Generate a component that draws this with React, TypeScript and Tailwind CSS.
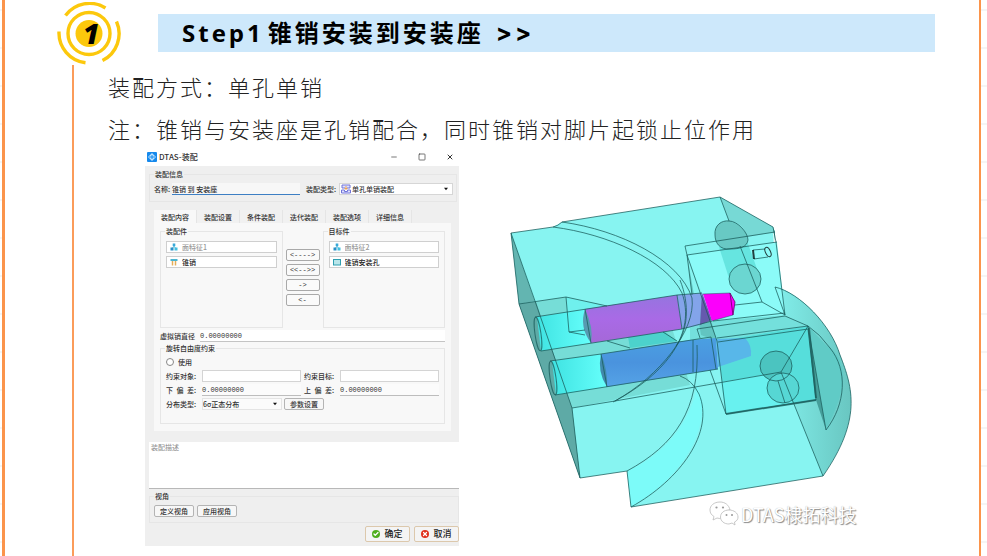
import React from "react";
import { Check, Minus, Square, X } from "lucide-react";

const tabs = ["装配内容", "装配设置", "条件装配", "迭代装配", "装配选项", "详细信息"];
const moves = ["<---->", "<<-->>", "->", "<-"];

function StepBadge() {
  return (
    <svg viewBox="0 0 64 64" className="w-16 h-16 shrink-0" role="img" aria-label="1">
      <g fill="none" stroke="#fcc80c" strokeWidth="3.4">
        <circle cx="32" cy="31.500" r="21" />
        <path d="M8.500 13.500A30 30 0 0 1 48.500 6" />
        <path d="M59.500 19.500A30 30 0 0 1 45.500 58.500" />
        <path d="M2 29.500A30 30 0 0 0 28.500 60.700" />
      </g>
      <circle cx="32" cy="31.500" r="13.500" fill="#fcc80c" />
      <text
        x="34"
        y="42"
        textAnchor="middle"
        fontFamily="Open Sans, sans-serif"
        fontWeight="800"
        fontStyle="italic"
        fontSize="28"
      >
        1
      </text>
    </svg>
  );
}

function FeatureIcon() {
  return (
    <svg viewBox="0 0 8 8" className="w-2 h-2 shrink-0">
      <path d="M4 2.500V4M2 5.500L4 3.500L6 5.500" stroke="#51b9dc" fill="none" />
      <rect x="2.700" y="0.500" width="2.600" height="2.600" fill="#37a8d8" />
      <rect x="0.500" y="4.500" width="3" height="3" fill="#288fc8" />
      <rect x="4.500" y="4.500" width="3" height="3" fill="#42bfe0" />
    </svg>
  );
}

function PinIcon() {
  return (
    <svg viewBox="0 0 8 8" className="w-2 h-2 shrink-0">
      <rect x="0.500" y="1" width="7" height="2" fill="#4bb5d0" />
      <path d="M2.500 3V7.500M5.500 3V7.500" stroke="#e6ae58" strokeWidth="1.500" />
    </svg>
  );
}

function HoleIcon() {
  return (
    <svg viewBox="0 0 8 8" className="w-2 h-2 shrink-0">
      <rect x="0.500" y="1.500" width="7" height="5.500" fill="#b9e6ea" stroke="#2e9fb0" />
    </svg>
  );
}

function AssemblyIcon() {
  return (
    <svg viewBox="0 0 10 10" className="w-2.5 h-2.5 shrink-0">
      <path d="M1 4V1H9V4H6M4 4H1" fill="#dfe1ff" stroke="#7074d8" />
      <path d="M0.500 9V6H3.500V7.500H6.500V6H9.500V9Z" fill="#dfe1ff" stroke="#7074d8" />
      <path d="M5 2V6M3.500 4.500H6.500" stroke="#eaa353" />
    </svg>
  );
}

function Arrow() {
  return (
    <svg viewBox="0 0 6 4" className="w-1 h-1 mr-1 shrink-0">
      <path d="M0 0H6L3 4Z" fill="#111" />
    </svg>
  );
}

function Group({ title, className, children }: { title: string; className?: string; children?: React.ReactNode }) {
  return (
    <fieldset className={`min-w-0 border border-[#e6e6e6] ${className ?? ""}`}>
      <legend className="ml-1 px-px leading-[8px]">{title}</legend>
      {children}
    </fieldset>
  );
}

function ListItem({ icon, value, muted }: { icon: React.ReactNode; value: string; muted?: boolean }) {
  return (
    <div className="flex items-center gap-1 h-3 pl-[3px] bg-white border border-[#cfcfcf]">
      {icon}
      <input
        readOnly
        aria-label={value}
        defaultValue={value}
        className={`min-w-0 flex-1 bg-transparent outline-none ${muted ? "text-[#999]" : "text-[#222]"}`}
      />
    </div>
  );
}

function Field({ id, label, value }: { id: string; label: string; value?: string }) {
  return (
    <div className="flex items-center flex-1 min-w-0">
      <label htmlFor={id} className="w-9 shrink-0 whitespace-nowrap">
        {label}
      </label>
      <input
        id={id}
        defaultValue={value}
        className={`min-w-0 flex-1 h-3 font-['Liberation_Mono','Noto_Sans_CJK_SC',monospace] outline-none ${
          value ? "bg-[#fbfbfb] border-b border-[#bdbdbd]" : "bg-white border border-[#d4d4d4]"
        }`}
      />
    </div>
  );
}

const smallButton = "h-3 w-10 rounded-[2px] border border-[#b4b4b4] bg-[#f7f7f7] leading-[9px]";
const actionButton =
  "flex items-center justify-center gap-1 w-[45px] h-4 rounded-[2px] border border-[#dcc8ac] bg-[#f4f4f4] text-[9px] text-[#222]";

function AssemblyDialog() {
  return (
    <section
      aria-label="DTAS-装配"
      className="w-[314px] shrink-0 text-[7px] leading-[8px] font-medium text-[#333] font-['Noto_Sans_CJK_SC',sans-serif]"
    >
      <div className="flex items-center h-[18px] pl-[2px] pr-[5px]">
        <svg viewBox="0 0 10 10" className="w-2.5 h-2.5">
          <rect width="10" height="10" rx="1" fill="#1689ec" />
          <path d="M5 1L9 5L5 9L1 5Z" fill="#bfe4ff" />
          <path d="M2 5H8M5 3V7" stroke="#1689ec" />
        </svg>
        <h2 className="ml-0.5 flex-1 text-[8px]">DTAS-装配</h2>
        <div className="flex items-center gap-5 text-[#333]">
          <button aria-label="最小化"><Minus className="w-2 h-2" /></button>
          <button aria-label="最大化"><Square className="w-2 h-2" /></button>
          <button aria-label="关闭"><X className="w-2 h-2" strokeWidth={3} /></button>
        </div>
      </div>

      <div className="bg-[#efefef] pt-1 pl-1 pb-1">
        <Group title="装配信息" className="mr-0.5 h-8">
          <div className="flex items-center pt-[5px] pl-1 pr-[3px]">
            <label htmlFor="name" className="w-[18px]">名称:</label>
            <input
              id="name"
              defaultValue="锥销 到 安装座"
              className="w-32 h-3 bg-[#f7f7f7] border-b border-[#3d7fc4] outline-none"
            />
            <label htmlFor="kind" className="ml-[6px] w-[33px] whitespace-nowrap">装配类型:</label>
            <div className="flex items-center flex-1 h-3 pl-px bg-white border border-[#d6d6d6]">
              <AssemblyIcon />
              <select id="kind" className="flex-1 min-w-0 appearance-none bg-transparent pl-px outline-none">
                <option>单孔单销装配</option>
              </select>
              <Arrow />
            </div>
          </div>
        </Group>

        <div role="tablist" className="flex mt-2 ml-[5px]">
          {tabs.map((tab, i) => (
            <button
              key={tab}
              role="tab"
              aria-selected={i === 0}
              className={`w-[43px] h-[13px] border-r border-[#e5e5e5] ${i === 0 ? "bg-[#f8f8f8]" : "bg-[#f1f1f1]"}`}
            >
              {tab}
            </button>
          ))}
        </div>

        <div className="ml-[5px] mr-2 bg-[#f8f8f8] pt-1 px-[6px] pb-[7px]">
          <div className="flex gap-[3px]">
            <Group title="装配件" className="flex-1 h-[101px]">
              <div className="flex flex-col gap-[3px] pt-[6px] px-[5px]">
                <ListItem icon={<FeatureIcon />} value="面特征1" muted />
                <ListItem icon={<PinIcon />} value="锥销" />
              </div>
            </Group>
            <div className="flex flex-col gap-[3px] pt-[22px]">
              {moves.map((move) => (
                <button
                  key={move}
                  className="w-[34px] h-3 rounded-[2px] border border-[#a9a9a9] bg-[#fafafa] leading-[9px] font-['Liberation_Mono',monospace]"
                >
                  {move}
                </button>
              ))}
            </div>
            <Group title="目标件" className="flex-1 h-[101px]">
              <div className="flex flex-col gap-[3px] pt-[6px] px-[5px]">
                <ListItem icon={<FeatureIcon />} value="面特征2" muted />
                <ListItem icon={<HoleIcon />} value="锥销安装孔" />
              </div>
            </Group>
          </div>

          <div className="flex items-center mt-[2px]">
            <label htmlFor="diameter" className="w-10">虚拟销直径</label>
            <input
              id="diameter"
              defaultValue="0.00000000"
              className="flex-1 h-3 bg-white border-b border-[#c4c4c4] font-['Liberation_Mono',monospace] outline-none"
            />
          </div>

          <Group title="旋转自由度约束" className="mt-[2px] h-20">
            <div className="flex flex-col gap-[2px] px-[5px] pt-1">
              <label className="flex items-center gap-1 h-3">
                <input type="radio" className="appearance-none w-2 h-2 rounded-full border border-[#888] bg-white" />
                使用
              </label>
              <div className="flex gap-[3px]">
                <Field id="object" label="约束对象:" />
                <Field id="target" label="约束目标:" />
              </div>
              <div className="flex gap-[3px]">
                <Field id="lower" label={"下\u2002偏\u2002差:"} value="0.00000000" />
                <Field id="upper" label={"上\u2002偏\u2002差:"} value="0.00000000" />
              </div>
              <div className="flex items-center">
                <label htmlFor="spread" className="w-9">分布类型:</label>
                <div className="flex items-center w-20 h-3 mr-[2px] border border-[#e4e4e4] bg-[#fbfbfb]">
                  <select id="spread" className="flex-1 min-w-0 appearance-none bg-transparent outline-none">
                    <option>6σ正态分布</option>
                  </select>
                  <Arrow />
                </div>
                <button className={smallButton}>参数设置</button>
              </div>
            </div>
          </Group>
        </div>

        <textarea
          aria-label="装配描述"
          placeholder="装配描述"
          className="block w-full h-[47px] mt-[11px] px-[2px] py-px resize-none bg-white border-b border-[#b8b8b8] placeholder:text-[#999] outline-none"
        />

        <Group title="视角" className="mt-[3px] h-[31px]">
          <div className="flex gap-[3px] pt-[5px] pl-1">
            <button className={smallButton}>定义视角</button>
            <button className={smallButton}>应用视角</button>
          </div>
        </Group>

        <div className="flex justify-end gap-1 mt-[3px]">
          <button className={actionButton}>
            <span className="flex items-center justify-center w-2 h-2 rounded-full bg-[#4fae1d] text-white">
              <Check className="w-1.5 h-1.5" strokeWidth={5} />
            </span>
            确定
          </button>
          <button className={actionButton}>
            <span className="flex items-center justify-center w-2 h-2 rounded-full bg-[#e0301c] text-white">
              <X className="w-1.5 h-1.5" strokeWidth={5} />
            </span>
            取消
          </button>
        </div>
      </div>
    </section>
  );
}

function PinModel() {
  return (
    <svg viewBox="500 185 370 350" className="block w-full" role="img" aria-label="锥销与安装座">
      <defs>
        <linearGradient id="bore" x1="0" x2="1">
          <stop offset="0" stopColor="#3fe3e2" />
          <stop offset="1" stopColor="#66fffb" />
        </linearGradient>
        <linearGradient id="violet" x1="0" y1="0" x2="0" y2="1">
          <stop offset="0" stopColor="#9575df" />
          <stop offset="0.500" stopColor="#a96ae6" />
          <stop offset="1" stopColor="#a568d8" />
        </linearGradient>
        <linearGradient id="blue" x1="0" y1="0" x2="0" y2="1">
          <stop offset="0" stopColor="#4aa0e2" />
          <stop offset="0.500" stopColor="#4a93de" />
          <stop offset="1" stopColor="#55a3e6" />
        </linearGradient>
        <linearGradient id="rim" x1="0" x2="1">
          <stop offset="0" stopColor="#82efeb" />
          <stop offset="1" stopColor="#69c6c1" />
        </linearGradient>
      </defs>

      {/* body */}
      <path
        d="M511 233L553 227L562 222L720 197L773 227L776 287C800 293 831 325 840 355C853 388 862 420 823 476L631 507L627 471L580 478L519 304Z"
        fill="#87f4f1"
      />
      <path d="M720 197L773 227L775 232L747 237C745 228 738 221 729 221Z" fill="#77d9d5" />
      <path d="M775 232L773 227L785 315L775 287Z" fill="#59aaa7" />
      <path d="M776 287C800 293 831 325 840 355C853 388 862 420 823 476L781 372L808 326L785 315Z" fill="url(#rim)" />
      <path d="M808 326L826 430C846 392 851 360 826 345Z" fill="#60cbc6" />
      <path d="M511 233L519 304L580 478L572 408Z" fill="#63b5b1" />
      <path d="M519 304L566 297L607 306L663 300L690 385L572 408L535 301Z" fill="#76ddd7" />
      <path d="M519 304L536 302L572 408L580 478Z" fill="#5eaaa6" />
      <path d="M566 297L607 306L585 310L585 331L569 332Z" fill="#6ff0ed" />
      <path d="M628 337L664 331L677 341L630 348Z" fill="#4cd2cc" />
      <path d="M690 326L713 320L785 315L808 326L717 341L690 345Z" fill="#74e0dc" />
      <path d="M627 471C665 455 692 420 697 385L702 400C706 440 675 482 631 507Z" fill="#7cfbf9" />

      {/* upper bores */}
      <path d="M687 255L777 242L785 315L713 321Z" fill="#8bfbf8" />
      <path d="M687 255L692 295L702 293L711 320L717 341L701 335Z" fill="#62c5c1" />
      <path d="M719 247L747 241L761 280L729 278Z" fill="#66e5e0" />
      <path d="M715 235C714 225 722 220 729 221C738 221 748 233 748 240C747 247 740 249 730 249C720 250 715 243 715 235Z" fill="#68c9c4" />
      <ellipse cx="745" cy="279" rx="16" ry="15" fill="#6bd6d1" />

      {/* lower pocket */}
      <path d="M717 341L808 326L816 400L726 414Z" fill="#56dedb" />
      <path d="M721 382L781 372L792 403L726 414Z" fill="#68f1ef" />
      <path d="M808 326L816 400L826 430Z" fill="#459e9a" />
      <ellipse cx="776" cy="366" rx="16" ry="15" fill="#4bc4c0" />
      <ellipse cx="783" cy="388" rx="16" ry="15" fill="#56d7d4" />

      {/* pin 1 */}
      <path d="M537 317L585 309L591 343L541 351Z" fill="url(#bore)" />
      <path d="M585 309L677 295L682 329L591 343Z" fill="url(#violet)" />
      <path d="M585 309Q579 327 591 343Q594 328 585 309Z" fill="#579ab1" />
      <path d="M677 295L702 293L700 325L682 329Z" fill="#83a4ea" />
      <path d="M702 293L712 320L700 325Z" fill="#6559ae" />
      <path d="M703 294L730 293L735 302L733 315L712 321Z" fill="#fb00fb" />

      {/* pin 2 */}
      <path d="M552 361L601 354L607 387L556 395Z" fill="url(#bore)" />
      <path d="M601 354L690 340L716 338L718 369L607 387Z" fill="url(#blue)" />
      <path d="M716 339L745 338Q752 345 751 356L718 367Z" fill="#58b7e9" />
      <path d="M601 354Q597 372 607 387Q608 370 601 354Z" fill="#408aad" />

      <g fill="none" stroke="#195b59" strokeWidth="1" strokeOpacity="0.750">
        <path d="M511 233L553 227Q558 226 562 222L720 197L773 227L776 242L785 315L775 287C800 293 831 325 840 355C853 388 862 420 823 476L631 507L627 471L580 478L519 304Z" />
        <path d="M511 233L535 301L572 408L580 478M572 408L615 401L781 372L823 476M781 372L808 326" />
        <path d="M519 304L566 297L607 306M566 297L569 332L585 330M569 332L585 335M607 341L630 348M663 332L677 341" />
        <path d="M562 222C620 230 680 260 692 298C696 330 660 376 615 401" />
        <path d="M553 227C608 234 666 260 682 293C696 332 668 373 613 402" />
        <path d="M680 280C690 305 688 330 676 346" />
        <path d="M720 197L729 221M685 246L775 232M687 255L777 242M685 246L687 255L717 341M687 255L692 295M740 246L762 302L785 315M735 305L762 302M713 321L785 313M697 329L785 316L808 326" />
        <path d="M715 235C714 225 722 220 729 221C738 221 748 233 748 240C747 247 740 249 730 249C720 250 715 243 715 235Z" />
        <ellipse cx="745" cy="279" rx="16" ry="15" />
        <path d="M753 250L765 249M754 259L768 257" />
        <path d="M753 250L754 259" stroke="#000" strokeWidth="2" />
        <ellipse cx="768" cy="252" rx="2.500" ry="5" transform="rotate(-25 768 252)" stroke="#000" />
        <path d="M697 329L700 338M717 338L808 326M718 342L808 329L816 400L726 414L717 341M710 370L726 414M711 337L716 369" />
        <path d="M808 326L826 430C846 404 848 370 830 348Q820 334 808 326" />
        <path d="M726 414L816 400" strokeWidth="2" />
        <path d="M809 328L816 398" strokeWidth="2" />
        <ellipse cx="776" cy="366" rx="16" ry="15" />
        <ellipse cx="783" cy="388" rx="16" ry="15" />
        <path d="M778 381L785 403" />
        <path d="M627 471C675 445 700 410 697 345M631 507C680 480 715 432 699 394Q692 380 680 376" />
        <ellipse cx="538" cy="334" rx="3" ry="17" transform="rotate(-8 538 334)" />
        <ellipse cx="553" cy="378" rx="3" ry="17" transform="rotate(-8 553 378)" />
        <path d="M535 317L677 295L702 293M541 351L682 329L712 321M585 309L591 343M677 295L682 329M550 361L601 354L711 337M555 395L718 369M601 354L607 387M693 340V372" />
        <path d="M703 294L730 293M712 321L733 315" strokeOpacity="0.500" />
        <path d="M730 293L733 315L735 302Z" stroke="#5b005f" />
      </g>
    </svg>
  );
}

function Watermark() {
  return (
    <figcaption className="absolute left-[209px] top-[316px] flex items-center gap-0.5 whitespace-nowrap text-[18px] leading-[24px] text-white font-['Noto_Sans_CJK_SC',sans-serif] [text-shadow:1px_1px_1px_#888,0px_0px_1px_#aaa]">
      <svg viewBox="0 0 30 26" className="w-[30px] h-[26px]">
        <g fill="#fff" stroke="#bbb" strokeWidth="0.800">
          <path d="M11 1C5 1 1 4.500 1 9C1 12 2.500 14 5 15.500L4 19L8 17Q11 18 13 17C14 12 18 9 21 9C20 4 16 1 11 1Z" />
          <path d="M20 9C15 9 11.500 12 11.500 16C11.500 20 15 23 20 23L23 22L26 24L25.500 21C28 20 29 18 29 16C29 12 25 9 20 9Z" />
        </g>
        <g fill="#999">
          <circle cx="7.500" cy="6.500" r="1.100" />
          <circle cx="14" cy="6.500" r="1.100" />
          <circle cx="17.500" cy="14" r="1" />
          <circle cx="23" cy="14" r="1" />
        </g>
      </svg>
      DTAS棣拓科技
    </figcaption>
  );
}

export default function App() {
  return (
    <div className="min-h-screen flex pl-[2px] pr-[6px] bg-[repeating-linear-gradient(#fff_0px,#fff_9px,#f5f5f5_9px,#f5f5f5_11px,#fff_11px,#fff_38px)]">
      <main className="flex flex-col flex-1 min-w-0 bg-white border-l-[3px] border-r-2 border-[#fb944b]">
        <header className="flex items-start pl-[52px] pr-11 pt-[2px] h-[65px]">
          <StepBadge />
          <h1 className="flex-1 flex gap-3 mt-3 ml-[37px] pl-[24px] h-[38px] bg-[#cde8fb] text-[24px] leading-[38px] tracking-[3px] font-bold text-black whitespace-nowrap font-['Open_Sans','Noto_Sans_CJK_SC',sans-serif]">
            <span className="flex gap-1">
              <span>Step1</span>
              <span>锥销安装到安装座</span>
            </span>
            <span className="font-['Inter',sans-serif]">&gt;&gt;</span>
          </h1>
        </header>

        <div className="flex-1 ml-[67px] border-l-2 border-[#fb9c5a] pt-[5px] pl-[34px]">
          <div className="flex flex-col gap-2.5 text-[22px] leading-[32px] tracking-[2px] font-light text-[#222] font-['Noto_Sans_CJK_SC',sans-serif]">
            <p>装配方式：单孔单销</p>
            <p>注：锥销与安装座是孔销配合，同时锥销对脚片起锁止位作用</p>
          </div>
          <div className="flex items-start gap-[41px] mt-1 ml-[37px]">
            <AssemblyDialog />
            <figure className="relative w-[370px] mt-[37px]">
              <PinModel />
              <Watermark />
            </figure>
          </div>
        </div>
      </main>
    </div>
  );
}
